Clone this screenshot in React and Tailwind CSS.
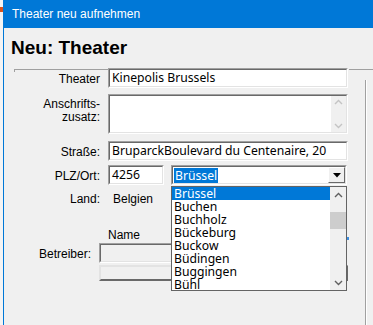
import React from 'react';

const sunkenOuter = 'border border-t-[#a0a0a0] border-l-[#a0a0a0] border-b-white border-r-white';
const sunkenInner = 'border border-t-[#696969] border-l-[#696969] border-b-[#e3e3e3] border-r-[#e3e3e3]';
const fieldFont = "font-['Noto_Sans',sans-serif] text-[12.2px]";

const Field = ({ className = '', inner = 'bg-white', children }) => (
  <div className={`${sunkenOuter} ${className} flex shrink-0`}>
    <div className={`${sunkenInner} ${inner} flex-1 flex items-center overflow-hidden`}>{children}</div>
  </div>
);

const Chevron = ({ up, color }) => (
  <svg width="9" height="6" viewBox="0 0 9 6" className="block">
    <path d={up ? 'M1 5 L4.5 1.5 L8 5' : 'M1 1 L4.5 4.5 L8 1'} fill="none" stroke={color} strokeWidth="1.4" />
  </svg>
);

const cities = ['Brüssel', 'Buchen', 'Buchholz', 'Bückeburg', 'Buckow', 'Büdingen', 'Buggingen', 'Bühl'];

export default function App() {
  return (
    <div className="w-[373px] h-[325px] overflow-hidden flex bg-[#f0f0f0] text-[12px] text-black font-['Liberation_Sans',Arial,sans-serif]">
      {/* sliver of the window behind */}
      <div className="w-[3px] shrink-0 bg-[#f4f4f4] flex flex-col">
        <div className="mt-[7px] h-[5px] bg-[#d9541e]" />
      </div>

      <div className="flex-1 flex flex-col min-h-0">
        <div className="h-[28px] shrink-0 bg-[#0078d7] text-white pl-[9px] flex items-center">Theater neu aufnehmen</div>

        <div className="flex-1 min-h-0 flex flex-col border-l border-[#0078d7] relative">
          <h1 className="mt-[9px] ml-[7px] text-[19px] leading-[22px] font-bold">Neu: Theater</h1>

          <div className="mt-[10px] flex">
            {/* main group */}
            <div className="ml-[10px] w-[334px] shrink-0 border-t border-[#a0a0a0] relative">
              <div className="absolute left-0 top-0 w-px h-[2px] bg-[#a0a0a0]" />

              <div className="-mt-[2px] flex gap-[8px]">
                <div className="w-[86px] h-[20px] flex items-center justify-end pt-[2px]">Theater</div>
                <Field className="w-[240px] h-[20px]">
                  <span className={`pl-[2px] leading-[16px] ${fieldFont}`}>Kinepolis Brussels</span>
                </Field>
              </div>

              <div className="mt-[6px] flex gap-[8px]">
                <div className="w-[86px] pt-[4px] text-right leading-[13px]">
                  Anschrifts-
                  <br />
                  zusatz:
                </div>
                <Field className="w-[240px] h-[40px]" inner="bg-white items-stretch justify-end">
                  <div className="w-[15px] bg-[#f0f0f0] flex flex-col items-center justify-between py-[3px]">
                    <Chevron up color="#c4c4c4" />
                    <Chevron color="#c4c4c4" />
                  </div>
                </Field>
              </div>

              <div className="mt-[7px] flex gap-[8px]">
                <div className="w-[86px] h-[20px] flex items-center justify-end pt-[2px]">Straße:</div>
                <Field className="w-[240px] h-[20px]">
                  <span className={`pl-[2px] leading-[16px] whitespace-nowrap ${fieldFont}`}>BruparckBoulevard du Centenaire, 20</span>
                </Field>
              </div>

              <div className="mt-[4px] flex gap-[8px]">
                <div className="w-[86px] h-[20px] flex items-center justify-end pt-[2px]">PLZ/Ort:</div>
                <Field className="w-[56px] h-[20px]">
                  <span className={`pl-[2px] leading-[16px] ${fieldFont}`}>4256</span>
                </Field>
                <div className="ml-[-1px] w-[176px] h-[20px] flex">
                  <Field className="flex-1" inner="bg-white justify-between">
                    <span className={`ml-[1px] px-[1px] bg-[#0078d7] text-white leading-[15px] ${fieldFont}`}>Brüssel</span>
                    <div className="w-[17px] h-[16px] bg-[#f0f0f0] border border-t-white border-l-white border-b-[#696969] border-r-[#696969] flex items-center justify-center">
                      <svg width="8" height="5" viewBox="0 0 8 5"><path d="M0 0 H8 L4 4.5 Z" fill="#000" /></svg>
                    </div>
                  </Field>
                </div>
              </div>

              <div className="mt-[7px] flex gap-[8px] leading-[15px]">
                <div className="w-[86px] text-right">Land:</div>
                <div className="pl-[5px]">Belgien</div>
              </div>

              <div className="mt-[21px] flex gap-[8px] leading-[15px]">
                <div className="w-[86px]" />
                <div>Name</div>
              </div>

              <div className="flex gap-[8px]">
                <div className="w-[86px] h-[20px] flex items-center justify-end pt-[2px]">Betreiber:</div>
                <div className="flex flex-col gap-[2px]">
                  <Field className="w-[247px] h-[20px]" inner="bg-[#f0f0f0]" />
                  <div className="w-[249px] h-[16px] bg-[#f0f0f0] border-2 border-t-[#e3e3e3] border-l-[#e3e3e3] border-b-[#696969] border-r-[#696969]" />
                </div>
              </div>

              {/* open dropdown list */}
              <div className={`absolute left-[157px] top-[116px] w-[176px] h-[105px] bg-white border border-[#646464] flex ${fieldFont}`}>
                <div className="flex-1 flex flex-col">
                  {cities.map((c, i) => (
                    <div
                      key={c}
                      className={i === 0 ? 'h-[13px] leading-[13px] pl-[2px] bg-[#0078d7] text-white' : 'h-[13px] leading-[13px] pl-[2px]'}
                    >
                      {c}
                    </div>
                  ))}
                </div>
                <div className="w-[16px] bg-[#f0f0f0] flex flex-col items-center pt-[5px] pb-[4px]">
                  <Chevron up color="#606060" />
                  <div className="mt-[14px] w-full h-[17px] bg-[#cdcdcd]" />
                  <div className="flex-1" />
                  <Chevron color="#606060" />
                </div>
              </div>
              <div className="absolute left-[333px] top-[167px] w-[2px] h-[3px] bg-[#3b8ee0]" />
            </div>

            {/* right panel edge */}
            <div className="ml-px flex-1 border-t border-[#a0a0a0] flex">
              <div className="ml-[16px] mt-[10px] h-[260px] border-l border-[#a0a0a0] w-[2px] bg-white" />
            </div>
          </div>
        </div>
      </div>
    </div>
  );
}
